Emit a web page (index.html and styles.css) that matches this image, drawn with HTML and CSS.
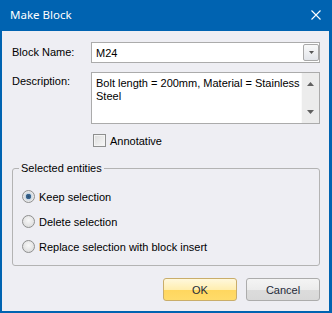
FILE: index.html
```html
<!DOCTYPE html>
<html lang="en">
<head>
  <meta charset="UTF-8">
  <title>Make Block</title>
  <link rel="stylesheet" href="styles.css">
</head>
<body>

  <div class="window">
    <div class="titlebar">
      <span class="title">Make Block</span>
      <svg class="close" width="10" height="10" viewBox="0 0 10 10">
        <path d="M0.5 0.5 L9.5 9.5 M9.5 0.5 L0.5 9.5" stroke="#fff" stroke-width="1.1" fill="none"/>
      </svg>
    </div>

    <div class="content">
      <div class="row">
        <label class="field-label">Block Name:</label>
        <div class="combo">
          <span class="combo-text">M24</span>
          <span class="combo-btn">
            <svg width="5" height="3" viewBox="0 0 5 3"><path d="M0 0 H5 L2.5 3 Z" fill="#555"/></svg>
          </span>
        </div>
      </div>

      <div class="row row-desc">
        <label class="field-label">Description:</label>
        <div class="memo">
          <div class="memo-text">Bolt length = 200mm, Material = Stainless<br>Steel</div>
          <div class="scrollbar">
            <svg width="7" height="4" viewBox="0 0 7 4"><path d="M3.5 0 L7 4 H0 Z" fill="#606060"/></svg>
            <svg width="7" height="4" viewBox="0 0 7 4"><path d="M0 0 H7 L3.5 4 Z" fill="#606060"/></svg>
          </div>
        </div>
      </div>

      <div class="check-row">
        <span class="checkbox"></span>
        <span>Annotative</span>
      </div>

      <fieldset class="group">
        <legend>Selected entities</legend>
        <div class="radio-row"><span class="radio checked"></span>Keep selection</div>
        <div class="radio-row"><span class="radio"></span>Delete selection</div>
        <div class="radio-row"><span class="radio"></span>Replace selection with block insert</div>
      </fieldset>

      <div class="buttons">
        <button class="btn btn-ok">OK</button>
        <button class="btn">Cancel</button>
      </div>
    </div>
  </div>

</body>
</html>
```

FILE: styles.css
```css
html, body {
  margin: 0;
  padding: 0;
}

body {
  font-family: "Liberation Sans", Arial, sans-serif;
  font-size: 11px;
  color: #000;
  background: #0063b1;
}

.window {
  width: 332px;
  height: 313px;
  box-sizing: border-box;
  border: 2px solid #0063b1;
  border-top: none;
  border-right-width: 3px;
  background: #eeeef3;
  display: flex;
  flex-direction: column;
}

.titlebar {
  height: 31px;
  flex-shrink: 0;
  margin: 0 -3px 0 -2px;
  background: #0063b1;
  display: flex;
  align-items: center;
  justify-content: space-between;
  padding: 0 11px 0 10px;
}

.title {
  font-family: "Noto Sans", "Open Sans", sans-serif;
  font-size: 11.5px;
  color: #fff;
  padding-bottom: 2px;
}

.close {
  margin-bottom: 2px;
}

.content {
  flex: 1;
  display: flex;
  flex-direction: column;
  padding: 11px 9px 10px 10px;
}

.row {
  display: flex;
}

.row-desc {
  margin-top: 9px;
}

.field-label {
  width: 79px;
  flex-shrink: 0;
  line-height: 20px;
}

.row-desc .field-label {
  line-height: 18px;
}

.combo {
  flex: 1;
  height: 21px;
  box-sizing: border-box;
  border: 1px solid #ababab;
  background: #fff;
  display: flex;
  align-items: center;
  justify-content: space-between;
}

.combo-text {
  padding-left: 4px;
}

.combo-btn {
  width: 16px;
  height: 17px;
  box-sizing: border-box;
  border: 1px solid #a9a9a9;
  border-radius: 2px;
  background: linear-gradient(#f9f9f9, #e2e5ea);
  display: flex;
  align-items: center;
  justify-content: center;
}

.memo {
  flex: 1;
  height: 52px;
  box-sizing: border-box;
  border: 1px solid #ababab;
  background: #fff;
  display: flex;
}

.memo-text {
  flex: 1;
  padding: 4px 0 0 4px;
  line-height: 13px;
}

.scrollbar {
  width: 17px;
  background: #ececec;
  border-left: 1px solid #fafafa;
  display: flex;
  flex-direction: column;
  align-items: center;
  justify-content: space-between;
  padding: 9px 0 9px;
}

.check-row {
  display: flex;
  align-items: center;
  margin: 10px 0 0 81px;
  height: 13px;
}

.checkbox {
  width: 13px;
  height: 13px;
  box-sizing: border-box;
  border: 1px solid #8e8f8f;
  background: linear-gradient(135deg, #dcdcdc, #f8f8f8);
  box-shadow: inset 0 0 0 1px #f4f4f4;
  margin-right: 4px;
}

.group {
  margin: 15px 0 0 0;
  padding: 9px 0 6px 6px;
  border: 1px solid #b3b3b3;
  border-radius: 3px;
}

.group legend {
  padding: 0 2px;
  line-height: 13px;
}

.radio-row {
  display: flex;
  align-items: center;
  height: 25px;
  margin-left: 3px;
}

.radio {
  width: 13px;
  height: 13px;
  box-sizing: border-box;
  border-radius: 50%;
  border: 1px solid #8e8f8f;
  background: radial-gradient(circle at 50% 40%, #f8f8f8, #d6d6d6);
  margin-right: 4px;
}

.radio.checked {
  background: radial-gradient(circle, #2a4d6e 0, #3c6a96 2.5px, #c9d6e2 3px, #e8e8e8 5px);
}

.buttons {
  display: flex;
  justify-content: flex-end;
  gap: 9px;
  margin-top: auto;
}

.btn {
  width: 74px;
  height: 23px;
  font-family: "Liberation Sans", Arial, sans-serif;
  font-size: 11px;
  color: #1e2a38;
  border: 1px solid #acacac;
  border-radius: 3px;
  background: linear-gradient(#f4f4f4 0, #ececec 50%, #dcdcdc 51%, #d8d8d8 100%);
  padding: 0;
}

.btn-ok {
  border-color: #c9ad6a;
  background: linear-gradient(#fff8dc 0, #ffeeb0 50%, #ffd65e 51%, #ffdb6a 100%);
}
```
